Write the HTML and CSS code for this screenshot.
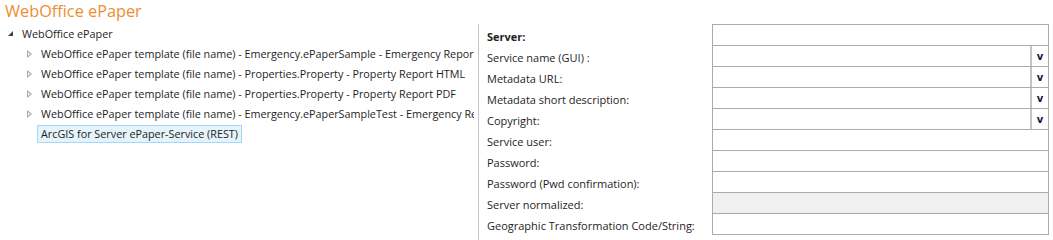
FILE: index.html
```html
<!DOCTYPE html>
<html lang="en">

<head>
    <meta charset="utf-8">
    <title>WebOffice ePaper</title>
    <link rel="stylesheet" href="styles.css">
</head>

<body>
    <h1 class="titel">WebOffice ePaper</h1>

    <div class="panel">
        <section class="tree">
            <div class="node open">
                <span class="pil fyldt"></span>
                <span class="tekst">WebOffice ePaper</span>
            </div>
            <div class="born">
                <div class="node">
                    <span class="pil"></span>
                    <span class="tekst">WebOffice ePaper template (file name) - Emergency.ePaperSample - Emergency Report</span>
                </div>
                <div class="node">
                    <span class="pil"></span>
                    <span class="tekst">WebOffice ePaper template (file name) - Properties.Property - Property Report HTML</span>
                </div>
                <div class="node">
                    <span class="pil"></span>
                    <span class="tekst">WebOffice ePaper template (file name) - Properties.Property - Property Report PDF</span>
                </div>
                <div class="node">
                    <span class="pil"></span>
                    <span class="tekst">WebOffice ePaper template (file name) - Emergency.ePaperSampleTest - Emergency Report</span>
                </div>
                <div class="node">
                    <span class="pil tom"></span>
                    <span class="tekst valgt">ArcGIS for Server ePaper-Service (REST)</span>
                </div>
            </div>
        </section>

        <section class="form">
            <label class="bold">Server:</label>
            <div class="felt"></div>

            <label>Service name (GUI) :</label>
            <div class="felt drop"><span class="knap">v</span></div>

            <label>Metadata URL:</label>
            <div class="felt drop"><span class="knap">v</span></div>

            <label>Metadata short description:</label>
            <div class="felt drop"><span class="knap">v</span></div>

            <label>Copyright:</label>
            <div class="felt drop"><span class="knap">v</span></div>

            <label>Service user:</label>
            <div class="felt"></div>

            <label>Password:</label>
            <div class="felt"></div>

            <label>Password (Pwd confirmation):</label>
            <div class="felt"></div>

            <label>Server normalized:</label>
            <div class="felt laast"></div>

            <label>Geographic Transformation Code/String:</label>
            <div class="felt"></div>
        </section>
    </div>
</body>

</html>
```

FILE: styles.css
```css
body {
    margin: 0;
    background-color: #ffffff;
    font-family: 'Open Sans', sans-serif;
    color: #1e1e1e;
    overflow: hidden;
}

.titel {
    margin: 0;
    padding: 0 0 0 5px;
    height: 24px;
    line-height: 22px;
    font-size: 16.3px;
    font-weight: 400;
    color: #ef8d2e;
}

.panel {
    display: flex;
    height: 216px;
}

/* venstre: trae */

.tree {
    width: 474px;
    margin-right: 4px;
    flex: none;
    overflow: hidden;
    font-size: 10.8px;
}

.node {
    display: flex;
    align-items: center;
    height: 20px;
    white-space: nowrap;
}

.node.open {
    padding-left: 8px;
}

.born .node {
    padding-left: 27px;
}

.pil {
    width: 12px;
    height: 20px;
    flex: none;
    position: relative;
}

.pil::before {
    content: "";
    position: absolute;
    left: 0;
    top: 6px;
    width: 0;
    height: 0;
    border-top: 4px solid transparent;
    border-bottom: 4px solid transparent;
    border-left: 5px solid #a6a6a6;
}

.pil::after {
    content: "";
    position: absolute;
    left: 1px;
    top: 8px;
    width: 0;
    height: 0;
    border-top: 2px solid transparent;
    border-bottom: 2px solid transparent;
    border-left: 2px solid #ffffff;
}

.pil.fyldt::before {
    left: 0;
    top: 7px;
    border: none;
    border-left: 5px solid transparent;
    border-bottom: 5px solid #404040;
}

.pil.fyldt::after,
.pil.tom::before,
.pil.tom::after {
    display: none;
}

.tekst {
    padding: 0 1px;
    line-height: 16px;
    border: 1px solid transparent;
}

.valgt {
    margin-left: -2px;
    padding: 0 3px;
    background-color: #e5f3fb;
    border-color: #a6d8f6;
}

/* hoejre: formular */

.form {
    flex: 1;
    border-left: 1px solid #c8c8c8;
    padding-left: 8px;
    display: grid;
    grid-template-columns: 225px 337px;
    grid-auto-rows: 21px;
    align-content: start;
    font-size: 11px;
}

.form label {
    display: flex;
    align-items: center;
    padding-top: 3px;
    white-space: nowrap;
}

.form label.bold {
    font-weight: 700;
}

.felt {
    border: 1px solid #ababab;
    margin-bottom: -1px;
    background-color: #ffffff;
    display: flex;
    justify-content: flex-end;
}

.felt.laast {
    background-color: #f0f0f0;
}

.knap {
    width: 16px;
    border-left: 2px solid #c4c4c4;
    font-family: 'DejaVu Sans', sans-serif;
    font-weight: 700;
    font-size: 10px;
    color: #111144;
    text-align: center;
    line-height: 19px;
    padding-top: 1px;
}
```
